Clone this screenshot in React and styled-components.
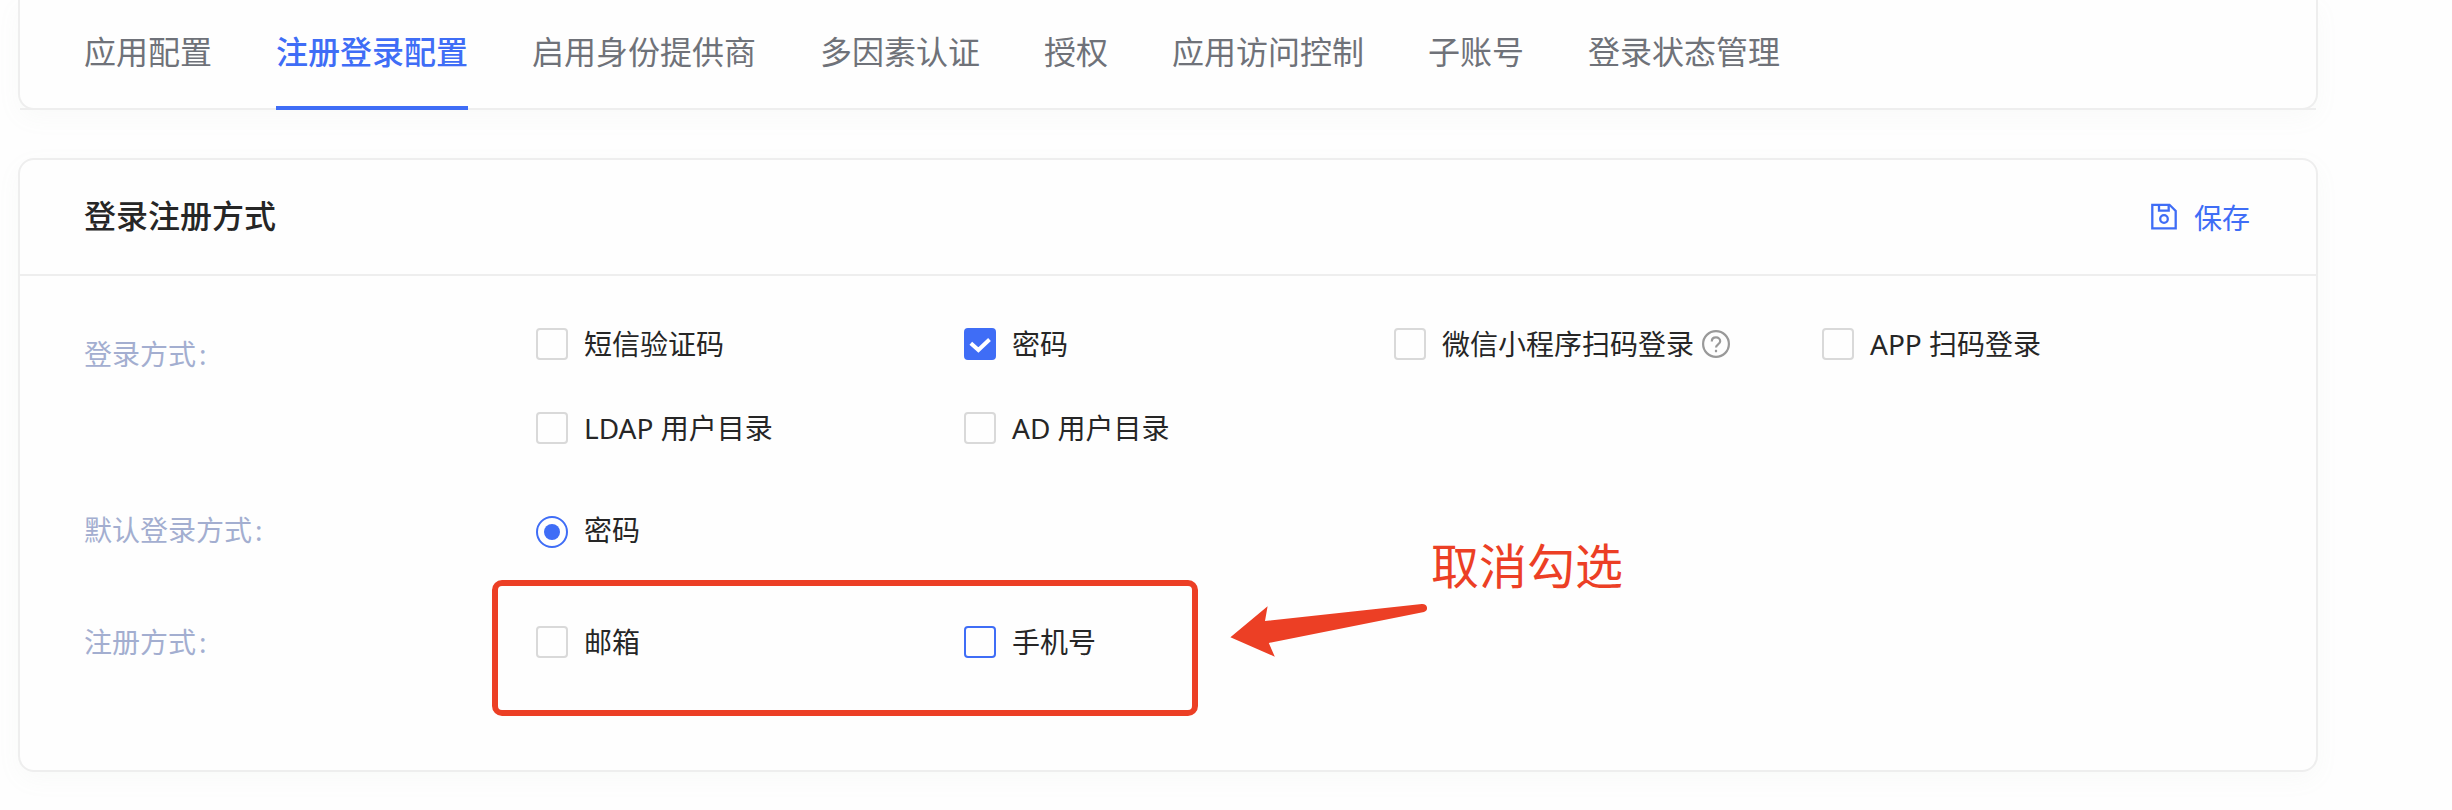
import React from 'react';
import styled, { createGlobalStyle, css } from 'styled-components';

const GlobalStyle = createGlobalStyle`
  * { box-sizing: border-box; }
  html, body { margin: 0; padding: 0; background: #fefefe; }
  body {
    font-family: "Noto Sans", "Noto Sans CJK SC", sans-serif;
    font-size: 28px;
    color: #262626;
    overflow: hidden;
  }
`;

const Page = styled.main`
  position: relative;
  width: 2452px;
  height: 810px;
  padding: 0 134px 0 18px;
  overflow: hidden;
`;

const Card = styled.section`
  background: #fefefe;
  border: 2px solid #eeeeee;
  border-radius: 16px;
  box-shadow: 0 8px 24px rgba(149, 175, 166, 0.05);
`;

const TabCard = styled(Card)`
  height: 110px;
  border-top: 0;
  border-radius: 0 0 16px 16px;
`;

const Tabs = styled.nav`
  display: flex;
  gap: 64px;
  height: 110px;
  padding: 0 64px;
  border-bottom: 2px solid #eeeeee;
`;

const Tab = styled.a`
  height: 110px;
  padding-top: 28px;
  font-size: 32px;
  line-height: 48px;
  white-space: nowrap;
  color: ${(p) => (p.$active ? '#3f6df6' : '#6f7279')};
  font-weight: ${(p) => (p.$active ? 500 : 400)};
  border-bottom: 4px solid ${(p) => (p.$active ? '#3f6df6' : 'transparent')};
`;

const FormCard = styled(Card)`
  margin-top: 48px;
  height: 614px;
`;

const CardHeader = styled.header`
  display: flex;
  justify-content: space-between;
  align-items: center;
  height: 116px;
  padding: 0 66px 0 64px;
  border-bottom: 2px solid #eeeeee;
`;

const Title = styled.h2`
  margin: 0;
  padding-bottom: 2px;
  font-size: 32px;
  line-height: 48px;
  font-weight: 500;
`;

const SaveButton = styled.button`
  display: flex;
  align-items: center;
  gap: 16px;
  padding: 0;
  border: 0;
  background: none;
  font: inherit;
  line-height: 44px;
  color: #3f6df6;

  span { padding-top: 2px; }
`;

const FormRow = styled.div`
  display: grid;
  grid-template-columns: 452px 1fr;
  padding-left: 64px;
  margin-top: ${(p) => p.$gap}px;
`;

const Label = styled.div`
  padding-top: ${(p) => p.$drop || 0}px;
  line-height: 44px;
  color: #a3aed0;

  &::after { content: ":"; margin-left: 3px; }
`;

const Options = styled.div`
  display: grid;
  grid-template-columns: 428px 430px 428px 428px;
  row-gap: 40px;
`;

const Option = styled.label`
  display: flex;
  align-items: center;
  gap: 16px;
  height: 44px;
  line-height: 44px;
  white-space: nowrap;
`;

const OptionText = styled.span`
  display: flex;
  align-items: center;
  gap: 8px;
`;

const Box = styled.span`
  display: flex;
  flex: none;
  width: 32px;
  height: 32px;
  border: 2px solid #d9d9d9;
  border-radius: 4px;
  ${(p) => p.$focused && css`border-color: #3f6df6;`}
  ${(p) => p.$checked && css`border-color: #3f6df6; background: #3f6df6;`}
`;

const Radio = styled.span`
  display: grid;
  place-items: center;
  position: relative;
  top: 2px;
  width: 32px;
  height: 32px;
  border: 2px solid #3f6df6;
  border-radius: 50%;

  &::after {
    content: "";
    width: 16px;
    height: 16px;
    border-radius: 50%;
    background: #3f6df6;
  }
`;

const Highlight = styled.div`
  position: absolute;
  left: 492px;
  top: 580px;
  width: 706px;
  height: 136px;
  border: 6px solid #ec3f25;
  border-radius: 10px;
`;

const Note = styled.div`
  position: absolute;
  left: 1431px;
  top: 530px;
  font-size: 48px;
  line-height: 72px;
  white-space: nowrap;
  color: #ec3f25;
`;

const Arrow = styled.svg`
  position: absolute;
  left: 1228px;
  top: 600px;
`;

const SaveIcon = () => (
  <svg width="28" height="28" viewBox="0 0 28 28" fill="none" stroke="currentColor" strokeWidth="2.3">
    <path d="M2.3 1.8h17.2l6.2 6.2v17.4H2.3z" />
    <path d="M9 2v5.7h9.7V2" />
    <circle cx="14" cy="16" r="3.8" />
  </svg>
);

const HelpIcon = () => (
  <svg width="28" height="28" viewBox="0 0 28 28" fill="none" stroke="#999999" strokeWidth="2.2">
    <circle cx="14" cy="14" r="12.9" />
    <path d="M9.8 11.4c0-2.4 1.8-4 4.2-4s4.2 1.6 4.2 3.8c0 3.2-4.2 3.1-4.2 6.4" />
    <path d="M14 19.8v2.4" />
  </svg>
);

const CheckMark = () => (
  <svg width="28" height="28" viewBox="0 0 28 28" fill="none" stroke="#fff" strokeWidth="4">
    <path d="M4.8 13.2l7.6 6.8L23.5 9.5" />
  </svg>
);

const Check = ({ children, checked, focused, help }) => (
  <Option>
    <Box $checked={checked} $focused={focused}>{checked && <CheckMark />}</Box>
    <OptionText>{children}{help && <HelpIcon />}</OptionText>
  </Option>
);

const tabs = ['应用配置', '注册登录配置', '启用身份提供商', '多因素认证', '授权', '应用访问控制', '子账号', '登录状态管理'];

export default function App() {
  return (
    <>
      <GlobalStyle />
      <Page>
        <TabCard>
          <Tabs>
            {tabs.map((t, i) => <Tab key={t} $active={i === 1}>{t}</Tab>)}
          </Tabs>
        </TabCard>
        <FormCard>
          <CardHeader>
            <Title>登录注册方式</Title>
            <SaveButton><SaveIcon /><span>保存</span></SaveButton>
          </CardHeader>
          <FormRow $gap={46}>
            <Label $drop={10}>登录方式</Label>
            <Options>
              <Check>短信验证码</Check>
              <Check checked>密码</Check>
              <Check help>微信小程序扫码登录</Check>
              <Check>APP 扫码登录</Check>
              <Check>LDAP 用户目录</Check>
              <Check>AD 用户目录</Check>
            </Options>
          </FormRow>
          <FormRow $gap={58}>
            <Label>默认登录方式</Label>
            <Option><Radio /><OptionText>密码</OptionText></Option>
          </FormRow>
          <FormRow $gap={68}>
            <Label>注册方式</Label>
            <Options>
              <Check>邮箱</Check>
              <Check focused>手机号</Check>
            </Options>
          </FormRow>
        </FormCard>
        <Highlight />
        <Arrow width="204" height="60" viewBox="0 0 204 60">
          <path fill="#ec3f25" d="M2.4 37.3L39.6 6.2L37 21L193.8 4Q198.5 3.8 199 7.5Q199.5 11 196 12L40.8 43L46.8 56.7Z" />
        </Arrow>
        <Note>取消勾选</Note>
      </Page>
    </>
  );
}
